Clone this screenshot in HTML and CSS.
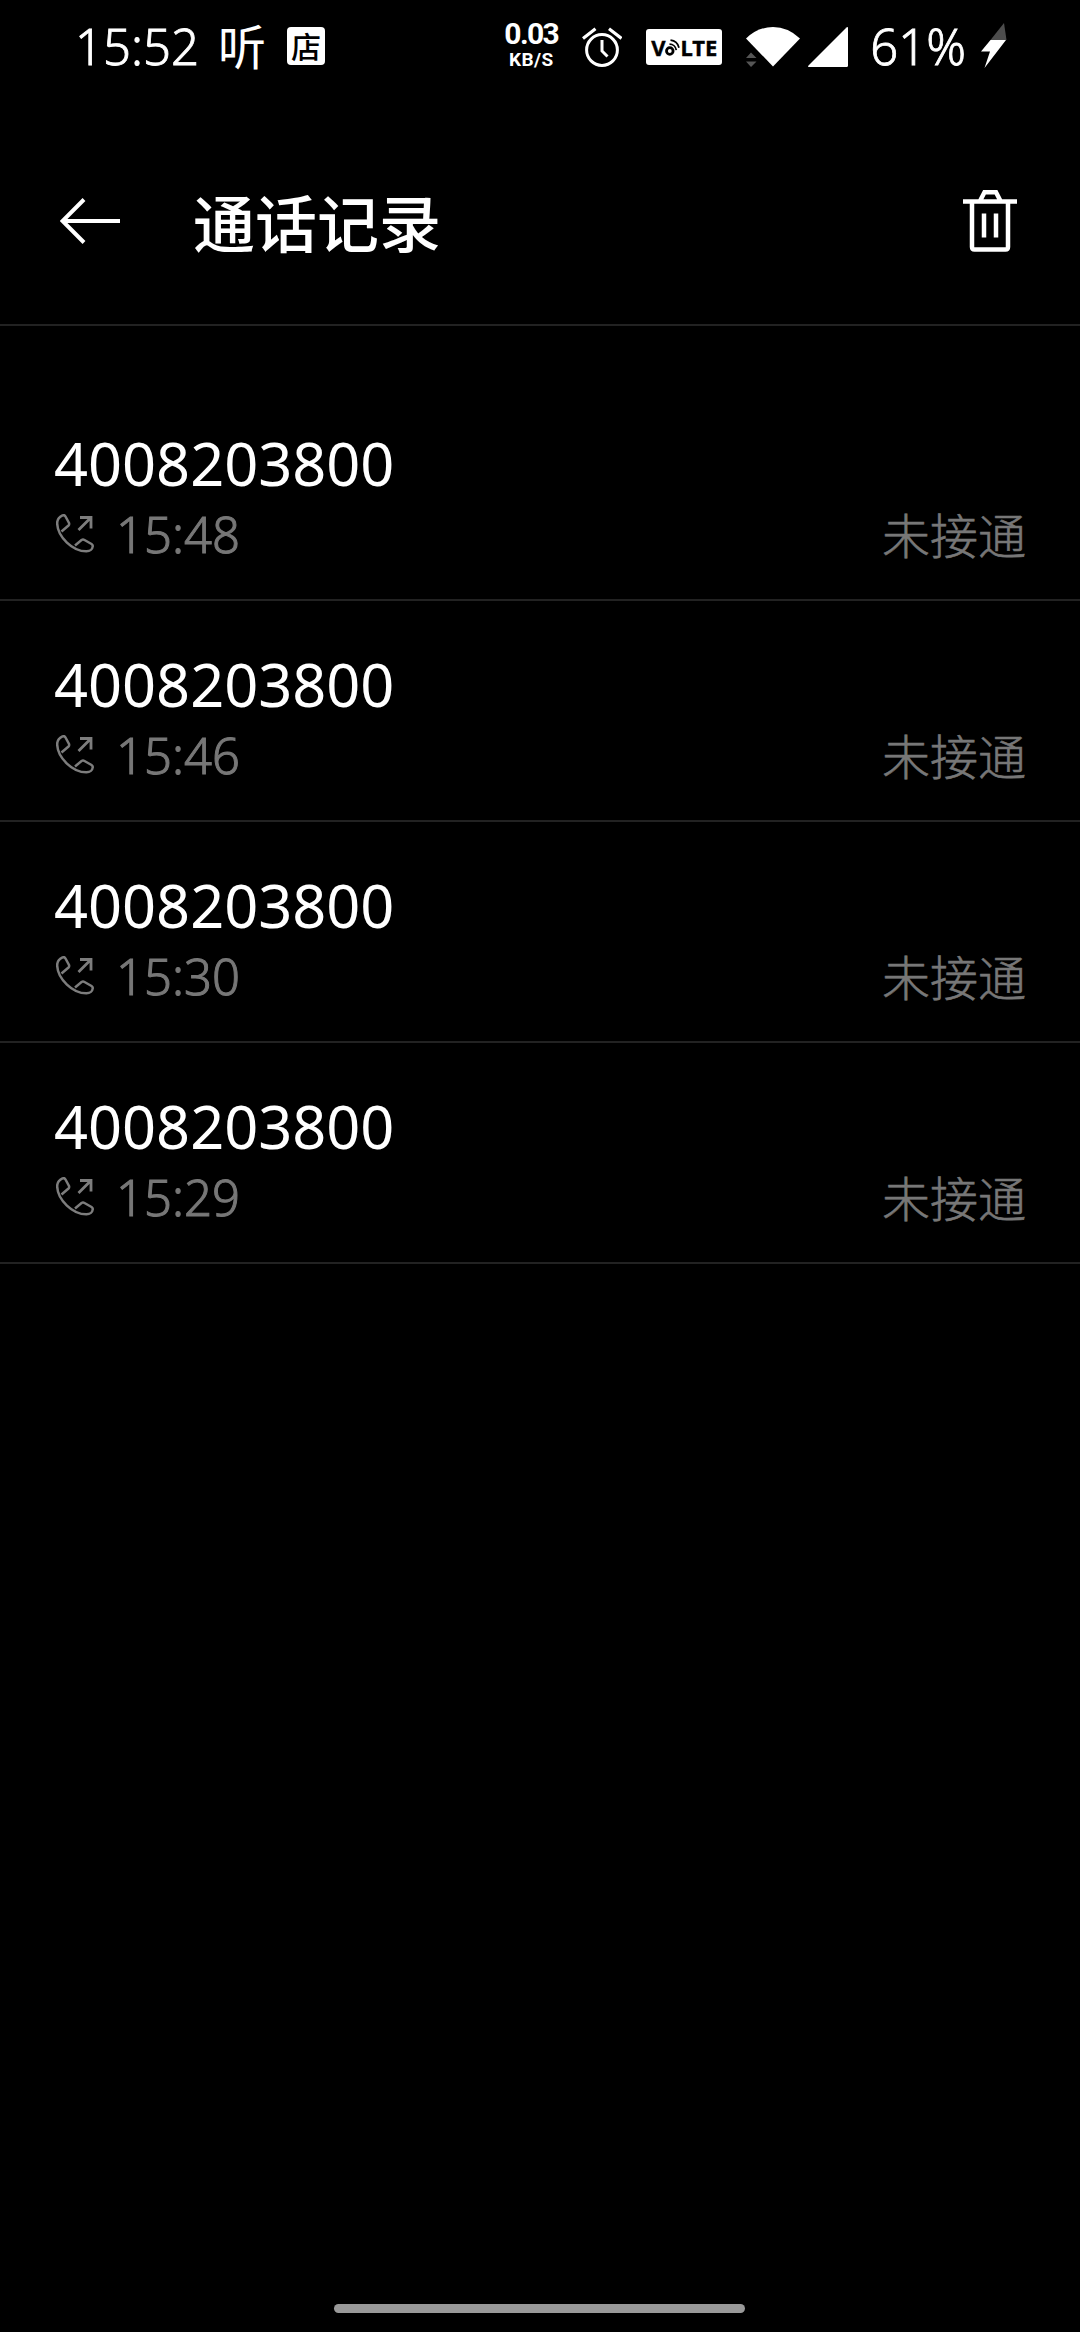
FILE: index.html
```html
<!DOCTYPE html>
<html lang="zh-CN">
<head>
    <meta charset="UTF-8">
    <title>通话记录</title>
    <link rel="stylesheet" href="styles.css">
</head>
<body>
    <div class="status-bar">
        <div class="status-left">
            <span class="status-text">15:52</span>
            <span class="app-listen">听</span>
            <span class="app-shop">店</span>
        </div>
        <div class="status-right">
            <div class="net-speed">
                <span class="speed">0.03</span>
                <span class="unit">KB/S</span>
            </div>
            <svg class="alarm" width="40" height="40" viewBox="0 0 40 40" fill="none" stroke="#fff">
                <circle cx="20" cy="23" r="15.4" stroke-width="3"/>
                <path d="M20 13v11l5.500 5.500" stroke-width="3"/>
                <path d="M1 11.500L13.500 1.800M27 1.800L39.500 11.500" stroke-width="3.200"/>
            </svg>
            <div class="volte">
                <span>V</span>
                <svg width="15" height="18" viewBox="0 0 15 18" fill="none" stroke="#000">
                    <circle cx="4.800" cy="13" r="3.300" stroke-width="2.800"/>
                    <path d="M4.500 6.200a7 7 0 0 1 6.800 6M5.500 2.200a10 10 0 0 1 8.500 7.500" stroke-width="1.800"/>
                </svg>
                <span>LTE</span>
            </div>
            <svg class="wifi" width="54" height="40" viewBox="0 0 54 40">
                <path d="M0 11.500Q12 0 27 0T54 11.500L27 39.500z" fill="#fff"/>
                <path d="M0 31l5-5.500 5.500 5.500zM0 34.500h10.500l-5.500 5.500z" fill="#555"/>
            </svg>
            <svg class="signal" width="40" height="40" viewBox="0 0 40 40">
                <path d="M38.500.5q1.500-1 1.500.500v37.500q0 1.500-1.500 1.500H1q-1.500 0-.5-1.500z" fill="#fff"/>
            </svg>
            <span class="status-text battery">61%</span>
            <svg class="bolt" width="27" height="46" viewBox="0 0 27 46">
                <path d="M23 0L9.500 17h16z" fill="#4d4d4d"/>
                <path d="M9.500 17h15.500L3.500 45l5.500-16.500H0z" fill="#fff"/>
            </svg>
        </div>
    </div>

    <div class="header">
        <svg class="back" width="60" height="46" viewBox="0 0 60 46" fill="none" stroke="#fff" stroke-width="4">
            <path d="M24 1.500L2.500 23L24 44.500M3 23h57"/>
        </svg>
        <h1>通话记录</h1>
        <svg class="trash" width="54" height="62" viewBox="0 0 54 62" fill="none" stroke="#fff" stroke-width="4.500">
            <path d="M0 11.500h54M17 11l4.500-8.700h11.500L37.500 11M9 12v45q0 2.500 2.500 2.500h31q2.500 0 2.500-2.500v-45M21 23.500v24M33 23.500v24"/>
        </svg>
    </div>

    <div class="calls">
        <div class="call">
            <div class="number">4008203800</div>
            <div class="detail">
                <svg class="outgoing" width="38" height="39" viewBox="0 0 38 39"><use href="#outgoing"/></svg>
                <span class="time">15:48</span>
                <span class="state">未接通</span>
            </div>
        </div>
        <div class="call">
            <div class="number">4008203800</div>
            <div class="detail">
                <svg class="outgoing" width="38" height="39" viewBox="0 0 38 39"><use href="#outgoing"/></svg>
                <span class="time">15:46</span>
                <span class="state">未接通</span>
            </div>
        </div>
        <div class="call">
            <div class="number">4008203800</div>
            <div class="detail">
                <svg class="outgoing" width="38" height="39" viewBox="0 0 38 39"><use href="#outgoing"/></svg>
                <span class="time">15:30</span>
                <span class="state">未接通</span>
            </div>
        </div>
        <div class="call">
            <div class="number">4008203800</div>
            <div class="detail">
                <svg class="outgoing" width="38" height="39" viewBox="0 0 38 39"><use href="#outgoing"/></svg>
                <span class="time">15:29</span>
                <span class="state">未接通</span>
            </div>
        </div>
    </div>

    <div class="home-bar"></div>

    <svg width="0" height="0">
        <defs>
            <g id="outgoing" fill="none" stroke="#7d7d7d" stroke-width="2.500">
                <path d="M6.500 1.300C3 3 1 6 1.200 9.500C1.500 23 17 37.500 30.500 37.300C34 37.200 36.500 35 36.700 32.500Q37 31 35.500 30L28.500 26Q27 25.200 25.500 26L19 31.500M5.500 17.500L12.500 11.500Q13.500 10.500 13 9L9.500 2.500Q8.500 .6 6.500 1.300"/>
                <path d="M22.500 16L34.500 4M24 3.500h11v11" stroke-width="2.800"/>
            </g>
        </defs>
    </svg>
</body>
</html>
```
FILE: styles.css
```css
* {
    box-sizing: border-box;
}

body {
    margin: 0;
    height: 2332px;
    display: flex;
    flex-direction: column;
    background: #000;
    color: #fff;
    font-family: "Noto Sans", "Noto Sans CJK SC", sans-serif;
    overflow: hidden;
}

svg {
    display: block;
    flex: none;
}

.status-bar {
    display: flex;
    justify-content: space-between;
    height: 94px;
    padding: 0 72px 0 75px;
}

.status-left,
.status-right {
    display: flex;
    align-items: center;
    height: 94px;
}

.status-text {
    font-size: 49px;
    font-weight: 300;
    line-height: 92px;
    margin-bottom: 2px;
    -webkit-text-stroke: 0.8px currentColor;
}

.app-listen {
    margin: 0 0 6px 19px;
    font-family: "Noto Sans CJK SC", sans-serif;
    font-size: 48px;
    line-height: 88px;
}

.app-shop {
    width: 38px;
    height: 38px;
    margin: 0 0 2px 21px;
    border-radius: 4px;
    background: #fff;
    color: #000;
    font-family: "Noto Sans CJK SC", sans-serif;
    font-size: 30px;
    font-weight: 500;
    line-height: 36px;
    text-align: center;
}

.net-speed {
    width: 54px;
    display: flex;
    flex-direction: column;
    align-items: center;
    margin-bottom: 4px;
    font-family: Roboto, sans-serif;
    font-weight: 700;
}

.speed {
    font-size: 30px;
    line-height: 28px;
    letter-spacing: -1.6px;
}

.unit {
    font-size: 19px;
    line-height: 23px;
    letter-spacing: 0.4px;
}

.alarm {
    margin-left: 24px;
}

.volte {
    display: flex;
    align-items: center;
    justify-content: center;
    width: 76px;
    height: 36px;
    margin-left: 24px;
    border-radius: 3px;
    background: #fff;
    color: #000;
    font-family: "Noto Sans", sans-serif;
    font-size: 22px;
    font-weight: 700;
    line-height: 36px;
    -webkit-text-stroke: 0.4px currentColor;
}

.wifi {
    margin-left: 24px;
}

.signal {
    margin-left: 8px;
}

.battery {
    margin-left: 22px;
}

.bolt {
    margin: 0 0 3px 15px;
}

.header {
    display: flex;
    align-items: flex-start;
    height: 232px;
    padding: 0 63px 0 60px;
    border-bottom: 2px solid #222;
}

.back {
    margin-top: 104px;
}

h1 {
    margin: 82px 0 0 73px;
    font-family: "Noto Sans CJK SC", sans-serif;
    font-size: 62px;
    font-weight: 500;
    line-height: 90px;
}

.trash {
    margin: 96px 0 0 auto;
}

.calls {
    padding-top: 54px;
}

.call {
    height: 221px;
    padding: 43px 54px 0;
    border-bottom: 2px solid #222;
}

.number {
    font-size: 59.5px;
    line-height: 80px;
}

.detail {
    display: flex;
    align-items: center;
    height: 62px;
    color: #777;
}

.outgoing {
    margin: -1px 0 0 2px;
}

.time {
    margin-left: 22px;
    font-size: 49px;
    font-weight: 300;
    line-height: 62px;
    -webkit-text-stroke: 1px currentColor;
}

.state {
    margin: 0 0 2px auto;
    font-family: "Noto Sans CJK SC", sans-serif;
    font-size: 48px;
    font-weight: 300;
    line-height: 60px;
    -webkit-text-stroke: 0.6px currentColor;
}

.home-bar {
    width: 411px;
    height: 9px;
    margin: auto auto 19px 334px;
    border-radius: 5px;
    background: #999;
}
```
